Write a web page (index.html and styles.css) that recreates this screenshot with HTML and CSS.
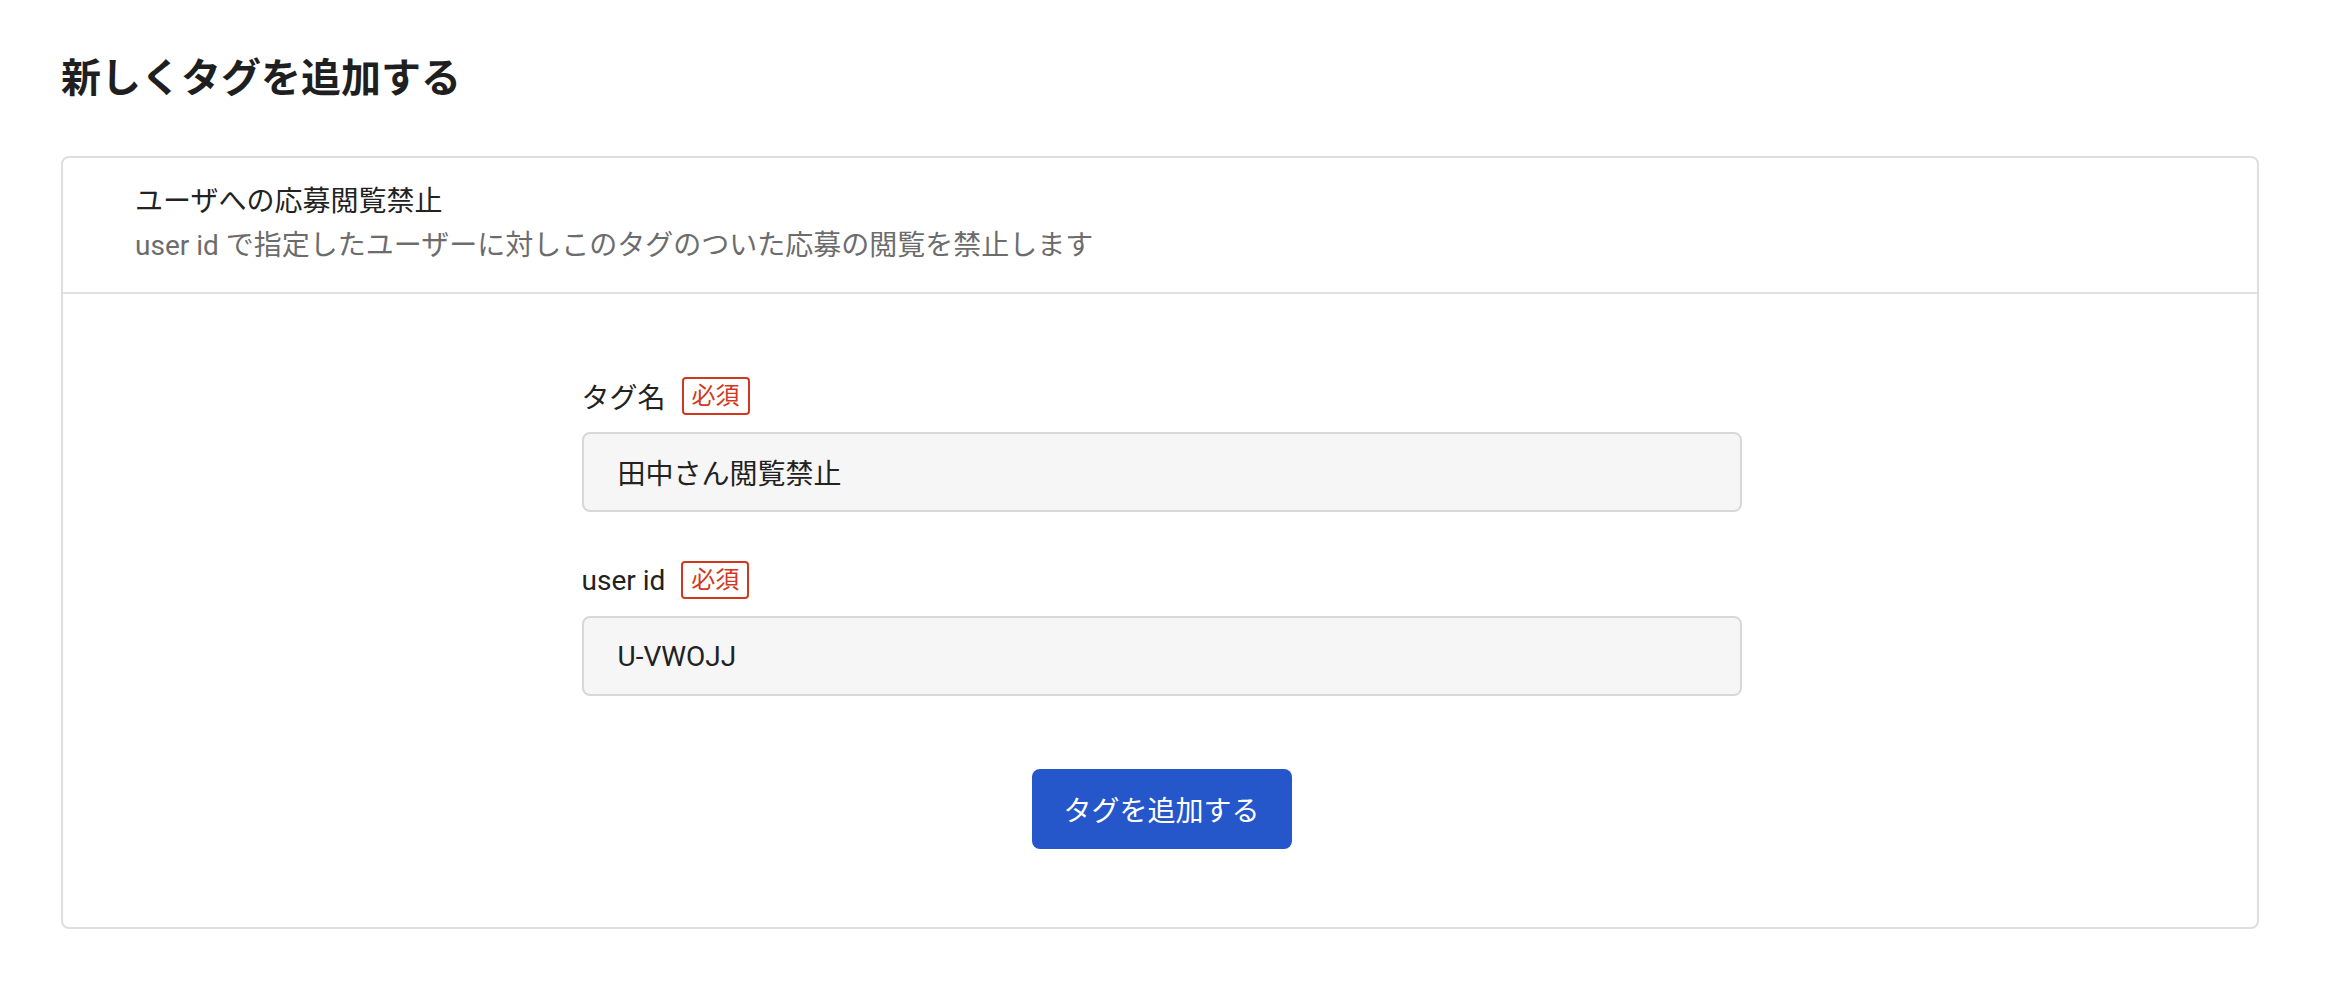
FILE: index.html
```html
<!DOCTYPE html>
<html lang="ja">
<head>
<meta charset="utf-8">
<title>新しくタグを追加する</title>
<link rel="stylesheet" href="styles.css">
</head>
<body>
<main class="page">
  <h1 class="page-title">新しくタグを追加する</h1>
  <section class="card">
    <header class="card-header">
      <div class="card-title">ユーザへの応募閲覧禁止</div>
      <div class="card-desc">user id で指定したユーザーに対しこのタグのついた応募の閲覧を禁止します</div>
    </header>
    <form class="card-body">
      <div class="field">
        <label class="field-label">タグ名<span class="badge">必須</span></label>
        <input class="input" type="text" value="田中さん閲覧禁止">
      </div>
      <div class="field">
        <label class="field-label">user id<span class="badge">必須</span></label>
        <input class="input" type="text" value="U-VWOJJ">
      </div>
      <div class="actions">
        <button class="btn-primary" type="button">タグを追加する</button>
      </div>
    </form>
  </section>
</main>
</body>
</html>
```
FILE: styles.css
```css
* { box-sizing: border-box; }
html, body { margin: 0; background: #fff; }
body {
  font-family: Roboto, "Noto Sans CJK JP", sans-serif;
  color: #222;
  font-size: 28px;
}
.page {
  padding: 49px 69px 0 61px;
}
.page-title {
  margin: 0 0 47px;
  font-size: 40px;
  line-height: 60px;
  font-weight: 700;
  color: #1f1f1f;
}
.card {
  border: 2px solid #dedede;
  border-radius: 8px;
  background: #fff;
}
.card-header {
  padding: 22px 72px 24px;
  border-bottom: 2px solid #e2e2e2;
}
.card-title {
  font-size: 28px;
  line-height: 44px;
  color: #222;
}
.card-desc {
  font-size: 28px;
  line-height: 44px;
  color: #6c6c6c;
}
.card-body {
  padding: 80px 0 78px;
  display: flex;
  flex-direction: column;
  align-items: center;
}
.field {
  width: 1160px;
  margin-left: 3px;
}
.field + .field { margin-top: 46px; }
.field-label {
  display: flex;
  align-items: center;
  height: 44px;
  font-size: 28px;
  color: #222;
  margin-bottom: 14px;
}
.badge {
  margin-left: 16px;
  border: 2px solid #d2381f;
  color: #d2381f;
  border-radius: 4px;
  font-size: 24px;
  line-height: 34px;
  padding: 0 8px;
}
.input {
  display: block;
  width: 100%;
  height: 80px;
  border: 2px solid #d8d8d8;
  border-radius: 8px;
  background: #f6f6f6;
  padding: 0 34px;
  font-family: Roboto, "Noto Sans CJK JP", sans-serif;
  font-size: 28px;
  color: #222;
  outline: none;
}
.actions {
  margin-top: 73px;
  margin-left: 3px;
}
.btn-primary {
  width: 260px;
  height: 80px;
  border: none;
  border-radius: 8px;
  background: #2557cb;
  color: #fff;
  font-family: Roboto, "Noto Sans CJK JP", sans-serif;
  font-size: 28px;
  cursor: pointer;
}
```
